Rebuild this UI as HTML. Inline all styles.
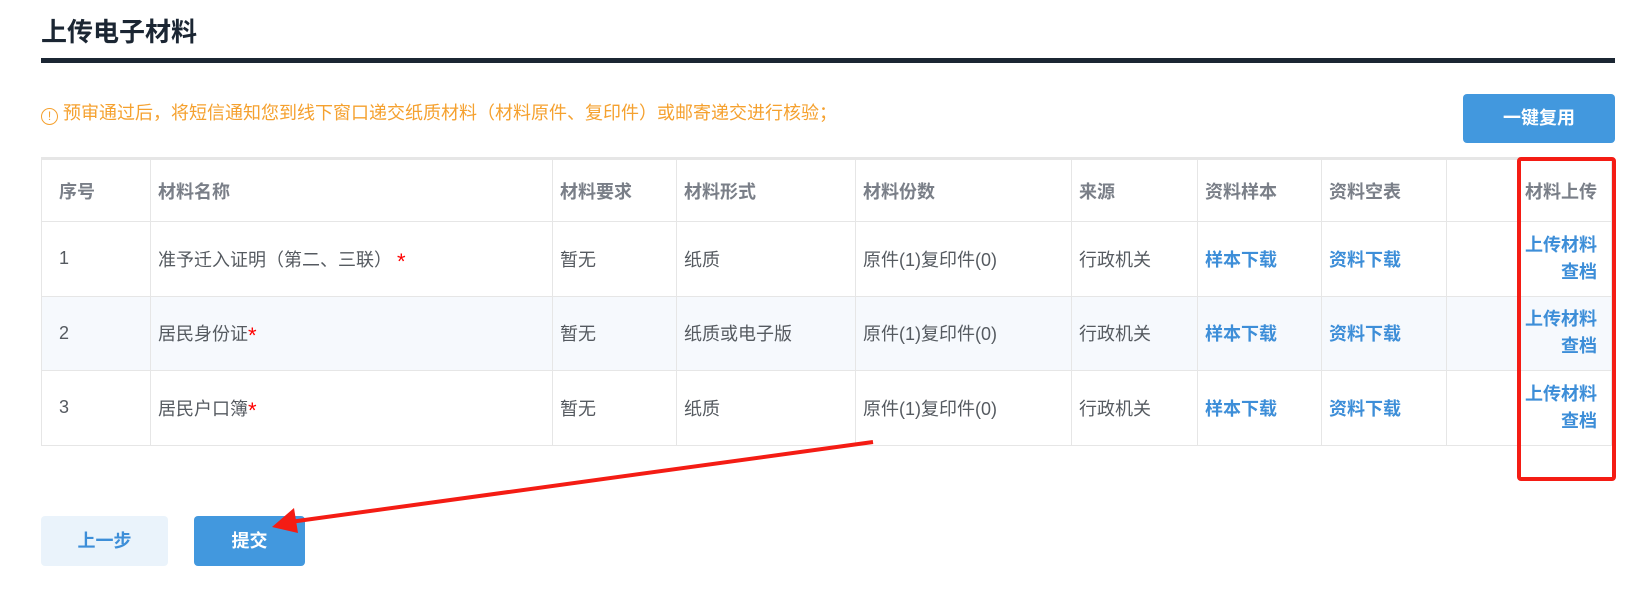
<!DOCTYPE html>
<html><head><meta charset="utf-8"><style>
*{margin:0;padding:0;box-sizing:border-box}
body{width:1651px;height:599px;background:#fff;position:relative;overflow:hidden;font-family:"Liberation Sans","Noto Sans CJK SC",sans-serif}
.a{position:absolute}
.title{left:41px;top:12px;font-size:26px;font-weight:bold;color:#1b2633}
.bar{left:41px;top:58px;width:1574px;height:5px;background:#1b2633}
.warn{left:41px;top:100px;font-size:18px;color:#f5a12f;line-height:26px}
.btn{border-radius:4px;color:#fff;font-weight:bold;font-size:18px;text-align:center;background:#4298de}
table{position:absolute;left:41px;top:157px;width:1571px;border-collapse:collapse;font-size:18px;color:#555a60}
td,th{border:1.5px solid #e6e6e6;padding:0 7px;text-align:left;vertical-align:middle}
th{height:63px;color:#7a7f88;font-weight:bold;border-top:3px solid #e6e6e6}
td{height:74.5px}
tr.s td{background:#f6f9fd}
.l{color:#3d8ed8;font-weight:bold}
.r{color:#f00;font-size:22px;line-height:18px;vertical-align:-3px}
.up{text-align:right;line-height:27px;padding-right:14px}
</style></head><body>
<div class="a title">上传电子材料</div>
<div class="a bar"></div>
<div class="a warn"><span style="display:inline-block;width:17px;height:17px;border:1.5px solid #f5a12f;border-radius:50%;font-size:12px;text-align:center;line-height:14px;vertical-align:-1px">!</span> 预审通过后，将短信通知您到线下窗口递交纸质材料（材料原件、复印件）或邮寄递交进行核验；</div>
<div class="a btn" style="left:1463px;top:94px;width:152px;height:49px;line-height:49px">一键复用</div>
<table>
<tr><th style="width:109px;padding-left:17px">序号</th><th style="width:402px">材料名称</th><th style="width:124px">材料要求</th><th style="width:179px">材料形式</th><th style="width:216px">材料份数</th><th style="width:126px">来源</th><th style="width:124px">资料样本</th><th style="width:125px">资料空表</th><th style="width:65px;border-right:none"></th><th style="border-left:none;text-align:right;padding-right:14px">材料上传</th></tr>
<tr><td style="padding-left:17px">1</td><td>准予迁入证明（第二、三联） <span class="r">*</span></td><td>暂无</td><td>纸质</td><td>原件(1)复印件(0)</td><td>行政机关</td><td class="l">样本下载</td><td class="l">资料下载</td><td style="border-right:none"></td><td class="l up" style="border-left:none">上传材料<br>查档</td></tr>
<tr class="s"><td style="padding-left:17px">2</td><td>居民身份证<span class="r">*</span></td><td>暂无</td><td>纸质或电子版</td><td>原件(1)复印件(0)</td><td>行政机关</td><td class="l">样本下载</td><td class="l">资料下载</td><td style="border-right:none"></td><td class="l up" style="border-left:none">上传材料<br>查档</td></tr>
<tr><td style="padding-left:17px">3</td><td>居民户口簿<span class="r">*</span></td><td>暂无</td><td>纸质</td><td>原件(1)复印件(0)</td><td>行政机关</td><td class="l">样本下载</td><td class="l">资料下载</td><td style="border-right:none"></td><td class="l up" style="border-left:none">上传材料<br>查档</td></tr>
</table>
<div class="a" style="left:1517px;top:157px;width:99px;height:324px;border:4px solid #f41c14;border-radius:4px"></div>
<div class="a btn" style="left:41px;top:516px;width:127px;height:50px;line-height:50px;background:#eaf3fb;color:#3d8ed8">上一步</div>
<div class="a btn" style="left:194px;top:516px;width:111px;height:50px;line-height:50px">提交</div>
<svg class="a" style="left:0;top:0" width="1651" height="599"><line x1="873" y1="442" x2="290" y2="522" stroke="#f41c14" stroke-width="4"/><polygon points="272,527 294,508 298,533" fill="#f41c14"/></svg>
</body></html>
